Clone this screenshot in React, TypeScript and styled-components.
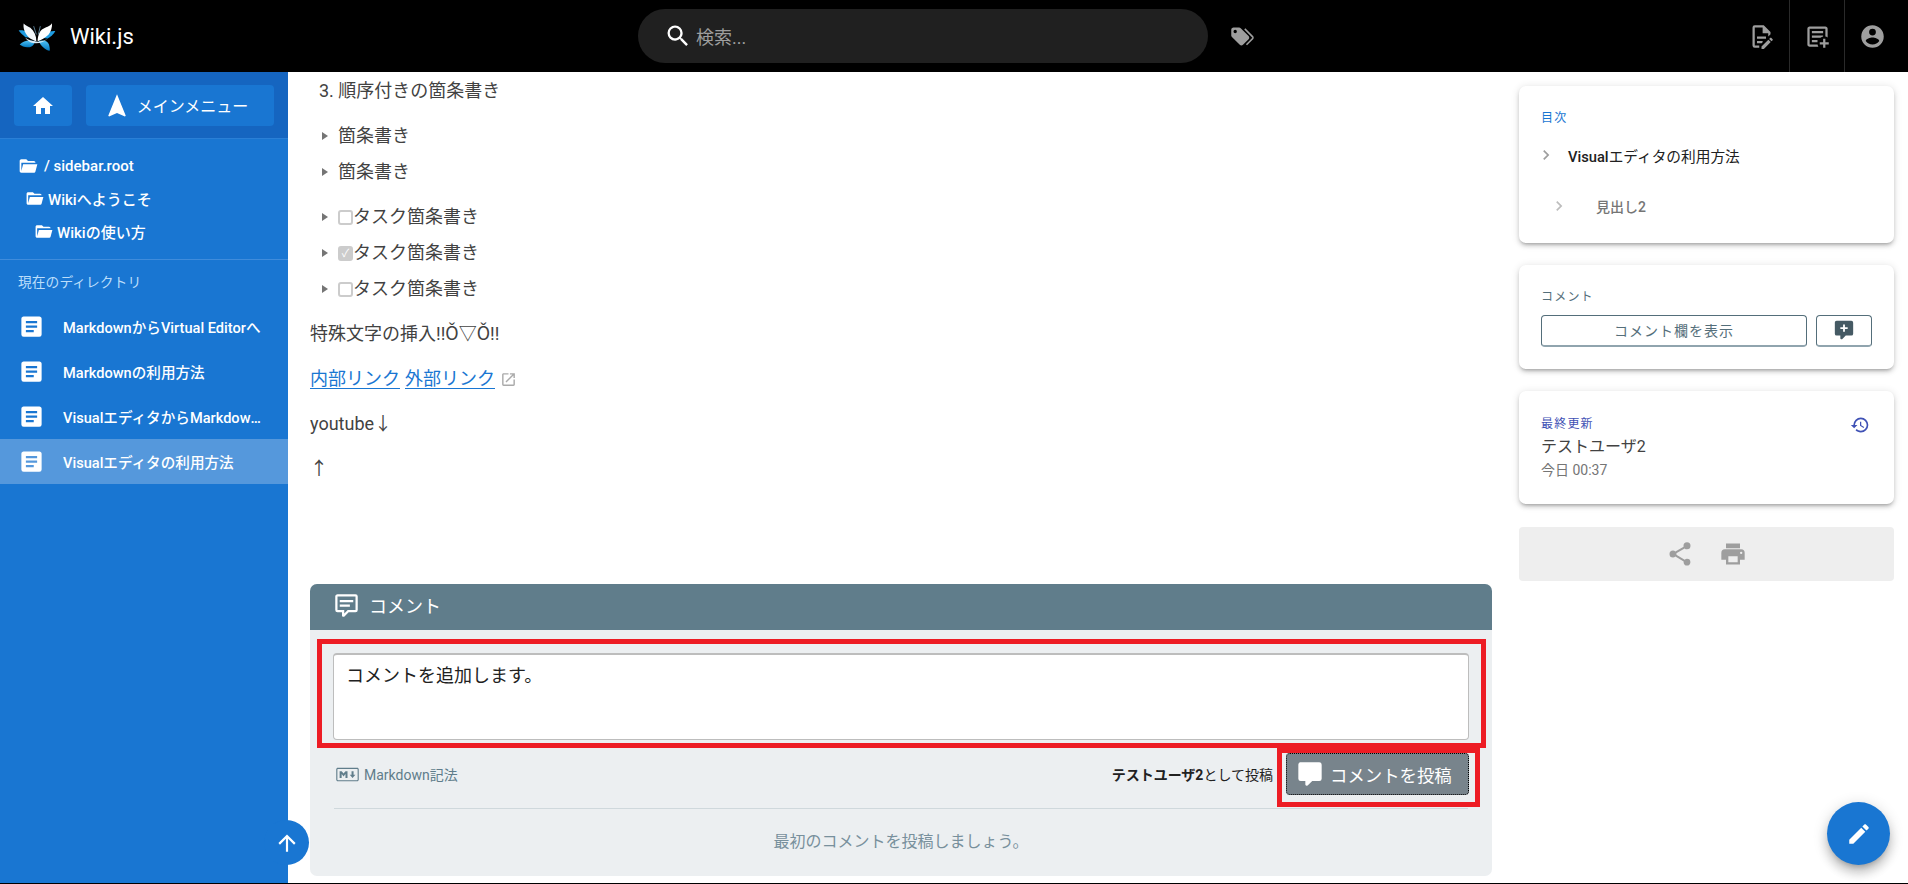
import React from 'react';
import styled, { createGlobalStyle } from 'styled-components';

const GlobalStyle = createGlobalStyle`
  html, body {
    margin: 0;
    padding: 0;
    background: #fff;
  }

  body {
    font-family: Roboto, "Noto Sans CJK JP", sans-serif;
    color: #424242;
    overflow: hidden;
  }

  * {
    box-sizing: border-box;
  }
`;

const mdi = {
  home: 'M10,20V14H14V20H19V12H22L12,3L2,12H5V20H10Z',
  navigation: 'M12,2L4.5,20.29L5.21,21L12,18L18.79,21L19.5,20.29L12,2Z',
  folderOpen: 'M19,20H4C2.89,20 2,19.1 2,18V6C2,4.89 2.89,4 4,4H10L12,6H19A2,2 0 0,1 21,8H21L4,8V18L6.14,10H23.21L20.93,18.5C20.7,19.37 19.92,20 19,20Z',
  textBox: 'M14,17H7V15H14M17,13H7V11H17M17,9H7V7H17M19,3H5C3.89,3 3,3.89 3,5V19A2,2 0 0,0 5,21H19A2,2 0 0,0 21,19V5C21,3.89 20.1,3 19,3Z',
  magnify: 'M9.5,3A6.5,6.5 0 0,1 16,9.5C16,11.11 15.41,12.59 14.44,13.73L14.71,14H15.5L20.5,19L19,20.5L14,15.5V14.71L13.73,14.44C12.59,15.41 11.11,16 9.5,16A6.5,6.5 0 0,1 3,9.5A6.5,6.5 0 0,1 9.5,3M9.5,5C7,5 5,7 5,9.5C5,12 7,14 9.5,14C12,14 14,12 14,9.5C14,7 12,5 9.5,5Z',
  tags: 'M5.5,9A1.5,1.5 0 0,0 7,7.5A1.5,1.5 0 0,0 5.5,6A1.5,1.5 0 0,0 4,7.5A1.5,1.5 0 0,0 5.5,9M17.41,11.58C17.77,11.94 18,12.44 18,13C18,13.55 17.78,14.05 17.41,14.41L12.41,19.41C12.05,19.77 11.55,20 11,20C10.45,20 9.95,19.78 9.58,19.41L2.59,12.42C2.22,12.05 2,11.55 2,11V6C2,4.89 2.89,4 4,4H9C9.55,4 10.05,4.22 10.41,4.58L17.41,11.58M13.54,5.71L14.54,4.71L21.41,11.58C21.78,11.94 22,12.45 22,13C22,13.55 21.78,14.05 21.42,14.41L16.04,19.79L15.04,18.79L20.75,13L13.54,5.71Z',
  account: 'M12,19.2C9.5,19.2 7.29,17.92 6,16C6.03,14 10,12.9 12,12.9C14,12.9 17.97,14 18,16C16.71,17.92 14.5,19.2 12,19.2M12,5A3,3 0 0,1 15,8A3,3 0 0,1 12,11A3,3 0 0,1 9,8A3,3 0 0,1 12,5M12,2A10,10 0 0,0 2,12A10,10 0 0,0 12,22A10,10 0 0,0 22,12C22,6.47 17.5,2 12,2Z',
  fileEdit: 'M8,12H16V14H8V12M10,20H6V4H13V9H18V12.1L20,10.1V8L14,2H6A2,2 0 0,0 4,4V20A2,2 0 0,0 6,22H10V20M8,18H12.1L13,17.1V16H8V18M20.2,13C20.3,13 20.5,13.1 20.6,13.2L21.9,14.5C22.1,14.7 22.1,15.1 21.9,15.3L20.9,16.3L18.8,14.2L19.8,13.2C19.9,13.1 20,13 20.2,13M20.2,16.9L14.1,23H12V20.9L18.1,14.8L20.2,16.9Z',
  textBoxPlus: 'M17,14H19V17H22V19H19V22H17V19H14V17H17V14M5,3H19C20.11,3 21,3.89 21,5V12.8C20.39,12.45 19.72,12.2 19,12.08V5H5V19H12.08C12.2,19.72 12.45,20.39 12.8,21H5C3.89,21 3,20.11 3,19V5C3,3.89 3.89,3 5,3M7,7H17V9H7V7M7,11H17V12.08C16.15,12.22 15.37,12.54 14.68,13H7V11M7,15H12V17H7V15Z',
  commentText: 'M9,22A1,1 0 0,1 8,21V18H4A2,2 0 0,1 2,16V4C2,2.89 2.9,2 4,2H20A2,2 0 0,1 22,4V16A2,2 0 0,1 20,18H13.9L10.2,21.71C10,21.9 9.75,22 9.5,22V22H9M10,16V19.08L13.08,16H20V4H4V16H10M6,7H18V9H6V7M6,11H15V13H6V11Z',
  comment: 'M9,22A1,1 0 0,1 8,21V18H4A2,2 0 0,1 2,16V4C2,2.89 2.9,2 4,2H20A2,2 0 0,1 22,4V16A2,2 0 0,1 20,18H13.9L10.2,21.71C10,21.9 9.75,22 9.5,22V22H9Z',
  commentPlus: 'M9,22A1,1 0 0,1 8,21V18H4A2,2 0 0,1 2,16V4C2,2.89 2.9,2 4,2H20A2,2 0 0,1 22,4V16A2,2 0 0,1 20,18H13.9L10.2,21.71C10,21.9 9.75,22 9.5,22H9M11,6V9H8V11H11V14H13V11H16V9H13V6H11Z',
  markdown: 'M20.56,18H3.44C2.65,18 2,17.37 2,16.59V7.41C2,6.63 2.65,6 3.44,6H20.56C21.35,6 22,6.63 22,7.41V16.59C22,17.37 21.35,18 20.56,18M3.44,7C3.2,7 3,7.18 3,7.41V16.59C3,16.82 3.2,17 3.44,17H20.56C20.8,17 21,16.82 21,16.59V7.41C21,7.18 20.8,7 20.56,7H3.44M5,15V9H6.8L8.5,11.2L10.2,9H12V15H10.2V11.6L8.5,13.8L6.8,11.6V15H5M16.5,15L14,12.2H15.6V9H17.4V12.2H19L16.5,15Z',
  history: 'M13.5,8H12V13L16.28,15.54L17,14.33L13.5,12.25V8M13,3A9,9 0 0,0 4,12H1L4.96,16.03L9,12H6A7,7 0 0,1 13,5A7,7 0 0,1 20,12A7,7 0 0,1 13,19C11.07,19 9.32,18.21 8.06,16.94L6.64,18.36C8.27,20 10.5,21 13,21A9,9 0 0,0 22,12A9,9 0 0,0 13,3',
  share: 'M18,16.08C17.24,16.08 16.56,16.38 16.04,16.85L8.91,12.7C8.96,12.47 9,12.24 9,12C9,11.76 8.96,11.53 8.91,11.3L15.96,7.19C16.5,7.69 17.21,8 18,8A3,3 0 0,0 21,5A3,3 0 0,0 18,2A3,3 0 0,0 15,5C15,5.24 15.04,5.47 15.09,5.7L8.04,9.81C7.5,9.31 6.79,9 6,9A3,3 0 0,0 3,12A3,3 0 0,0 6,15C6.79,15 7.5,14.69 8.04,14.19L15.16,18.34C15.11,18.55 15.08,18.77 15.08,19C15.08,20.61 16.39,21.91 18,21.91C19.61,21.91 20.92,20.61 20.92,19A2.92,2.92 0 0,0 18,16.08Z',
  printer: 'M18,3H6V7H18M19,12A1,1 0 0,1 18,11A1,1 0 0,1 19,10A1,1 0 0,1 20,11A1,1 0 0,1 19,12M16,19H8V14H16M19,8H5A3,3 0 0,0 2,11V17H6V21H18V17H22V11A3,3 0 0,0 19,8Z',
  pencil: 'M20.71,7.04C21.1,6.65 21.1,6 20.71,5.63L18.37,3.29C18,2.9 17.35,2.9 16.96,3.29L15.12,5.12L18.87,8.87M3,17.25V21H6.75L17.81,9.93L14.06,6.18L3,17.25Z',
  arrowUp: 'M13,20H11V8L5.5,13.5L4.08,12.08L12,4.16L19.92,12.08L18.5,13.5L13,8V20Z',
  chevron: 'M8.59,16.58L13.17,12L8.59,7.41L10,6L16,12L10,18L8.59,16.58Z',
  openNew: 'M14,3V5H17.59L7.76,14.83L9.17,16.24L19,6.41V10H21V3M19,19H5V5H12V3H5C3.89,3 3,3.9 3,5V19A2,2 0 0,0 5,21H19A2,2 0 0,0 21,19V12H19V19Z',
};

const Svg = styled.svg<{ $size: number; $color: string }>`
  width: ${p => p.$size}px;
  height: ${p => p.$size}px;
  flex: none;
  fill: ${p => p.$color};
`;

const Icon: React.FC<{ d: string; size?: number; color?: string }> = ({ d, size = 24, color = '#fff' }) => (
  <Svg viewBox="0 0 24 24" $size={size} $color={color}><path d={d} /></Svg>
);

const Logo = () => (
  <svg width="40" height="31" viewBox="20 30 120 92">
    <defs>
      <linearGradient id="wingLow" x1="0" y1="0" x2="0" y2="1">
        <stop offset="0" stopColor="#4fc3f7" />
        <stop offset="1" stopColor="#0277bd" />
      </linearGradient>
    </defs>
    <path d="M25 58 C40 55 55 62 68 80 L45 78 C38 72 30 65 25 58 Z" fill="#1e9be0" />
    <path d="M135 60 C120 58 105 65 92 80 L112 82 C122 76 130 68 135 60 Z" fill="#1e9be0" />
    <path d="M28 100 C40 88 55 85 75 90 C72 100 65 108 55 108 C45 110 35 105 28 100 Z" fill="url(#wingLow)" />
    <path d="M85 90 C100 85 112 90 116 100 C118 108 119 114 118 119 C105 116 92 105 85 90 Z" fill="url(#wingLow)" />
    <path d="M40 37 C38 50 42 65 55 78 C62 84 72 88 78 90 C78 75 72 60 60 50 C52 45 45 42 40 37 Z" fill="#f4f8fb" />
    <path d="M125 36 C120 45 105 48 95 55 C86 62 82 78 82 90 C92 88 105 80 115 70 C122 60 126 48 125 36 Z" fill="#ffffff" />
    <path d="M45 80 C60 92 92 98 112 82 C100 94 80 100 62 94 C55 91 49 86 45 80 Z" fill="#dcebf5" />
    <path d="M78 70 L70 45 M84 70 L90 45" stroke="#7fb2d0" strokeWidth="2" fill="none" />
  </svg>
);

const Root = styled.div`
  position: relative;
  width: 1908px;
  height: 884px;
  overflow: hidden;
  display: flex;
  flex-direction: column;
  border-bottom: 1px solid #000;
`;

const Header = styled.header`
  height: 72px;
  flex: none;
  background: #000;
  display: flex;
  align-items: center;
  padding-left: 17px;
`;

const Brand = styled.div`
  width: 621px;
  display: flex;
  align-items: center;
  gap: 13px;
  color: #fff;
  font-size: 22px;
  font-weight: 400;
`;

const SearchBox = styled.div`
  width: 570px;
  height: 54px;
  background: #202020;
  border-radius: 27px;
  padding-left: 26px;
  display: flex;
  align-items: center;
  gap: 4px;
  color: #9e9e9e;
  font-size: 18px;
`;

const TagButton = styled.div`
  margin-left: 21px;
  display: flex;
`;

const HeaderActions = styled.div`
  margin-left: auto;
  height: 100%;
  padding-right: 9px;
  display: flex;
`;

const HeaderAction = styled.div<{ $divider?: boolean }>`
  width: 55px;
  height: 100%;
  display: flex;
  align-items: center;
  justify-content: center;
  border-left: ${p => (p.$divider ? '1px solid #2a2a2a' : 'none')};
`;

const Body = styled.div`
  flex: 1;
  min-height: 0;
  display: grid;
  grid-template-columns: 288px 1fr 389px;
`;

const Sidebar = styled.nav`
  background: #1976d2;
  color: #fff;
`;

const SidebarTop = styled.div`
  height: 67px;
  background: #1565c0;
  border-bottom: 1px solid #2a7fd6;
  padding: 13px 14px 0;
  display: flex;
  gap: 14px;
`;

const HomeButton = styled.div`
  height: 41px;
  width: 58px;
  background: #1976d2;
  border-radius: 4px;
  display: flex;
  align-items: center;
  justify-content: center;
`;

const MenuButton = styled(HomeButton)`
  width: 189px;
  justify-content: flex-start;
  padding-left: 17px;
  gap: 6px;
  font-size: 16px;

  span {
    margin-top: -2px;
  }
`;

const Tree = styled.div`
  height: 121px;
  padding-top: 10px;
  border-bottom: 1px solid #3f8cdc;
`;

const TreeRow = styled.div<{ $indent: number; $gap?: number }>`
  height: 33px;
  padding-left: ${p => p.$indent}px;
  display: flex;
  align-items: center;
  gap: ${p => p.$gap ?? 4}px;
  font-size: 15px;
  font-weight: 500;
`;

const SectionTitle = styled.div`
  height: 44px;
  padding: 12px 0 0 18px;
  font-size: 13.8px;
  line-height: 20px;
  color: #bbdefb;
`;

const PageRow = styled.div<{ $active?: boolean }>`
  height: 45px;
  padding: 0 24px 0 18px;
  display: flex;
  align-items: center;
  gap: 18px;
  background: ${p => (p.$active ? '#5598dc' : 'transparent')};
  font-size: 14.6px;
  font-weight: 500;
`;

const PageLabel = styled.span`
  overflow: hidden;
  white-space: nowrap;
  text-overflow: ellipsis;
`;

const Main = styled.main`
  min-width: 0;
  padding: 0 27px 0 22px;
`;

const Line = styled.div<{ $gap?: boolean; $indent?: number }>`
  height: 36px;
  line-height: 36px;
  font-size: 18px;
  margin-top: ${p => (p.$gap ? 9 : 0)}px;
  padding-left: ${p => p.$indent ?? 0}px;
  padding-top: 2px;
  display: flex;
  align-items: center;
  white-space: pre;
`;

const Bullet = styled.span`
  width: 0;
  height: 0;
  margin: 0 10px 0 -16px;
  border-left: 6px solid #757575;
  border-top: 4px solid transparent;
  border-bottom: 4px solid transparent;
`;

const Checkbox = styled.span<{ $checked?: boolean }>`
  width: 15px;
  height: 15px;
  border: 2px solid #ccc;
  border-radius: 3px;
  background: ${p => (p.$checked ? '#ccc' : '#fff')};
  color: #fff;
  font-size: 11px;
  line-height: 11px;
  text-align: center;
`;

const Link = styled.a`
  color: #1976d2;
  margin-right: 5px;
  text-decoration: underline;
  text-decoration-thickness: 1px;
  text-underline-offset: 3px;
`;

const CommentPanel = styled.section`
  margin-top: 98px;
  height: 292px;
  border-radius: 7px;
  background: #eceff1;
  overflow: hidden;
`;

const PanelHeader = styled.div`
  height: 46px;
  background: #607d8b;
  color: #fff;
  padding: 0 0 4px 23px;
  display: flex;
  align-items: center;
  gap: 9px;
  font-size: 18px;
`;

const HighlightBox = styled.div`
  margin: 9px 6px 0 7px;
  height: 109px;
  border: 5px solid #ed1c24;
  padding: 9px 12px 3px 11px;
`;

const TextArea = styled.div`
  height: 87px;
  background: #fff;
  border: 1px solid #bdbdbd;
  border-top: 2px solid #bdbdbd;
  border-radius: 4px;
  padding: 9px 12px;
  font-size: 18px;
  line-height: 24px;
  color: #212121;
`;

const PanelFooter = styled.div`
  margin: 0 24px;
  height: 61px;
  border-bottom: 1px solid #cfd8dc;
  padding-top: 5px;
  display: flex;
  align-items: flex-start;
`;

const MarkdownHint = styled.div`
  height: 42px;
  display: flex;
  align-items: center;
  gap: 3px;
  color: #607d8b;
  font-size: 14px;
`;

const PostAs = styled.div`
  margin-left: auto;
  height: 42px;
  margin-right: 13px;
  display: flex;
  align-items: center;
  font-size: 14px;
  color: #212121;

  strong {
    font-weight: 700;
  }
`;

const PostButton = styled.div`
  position: relative;
  width: 183px;
  height: 42px;
  margin-right: -1px;
  background: #78848c;
  border: 1px dotted #000;
  border-radius: 4px;
  color: #fff;
  font-size: 17.4px;
  display: flex;
  align-items: center;
  padding-left: 9px;
  gap: 6px;
`;

// annotation drawn over the button
const PostHighlight = styled.span`
  position: absolute;
  top: -6px;
  left: -10px;
  right: -12px;
  bottom: -13px;
  border: 5px solid #ed1c24;
`;

const EmptyNote = styled.div`
  height: 66px;
  line-height: 66px;
  text-align: center;
  color: #78909c;
  font-size: 16px;
`;

const Aside = styled.aside`
  padding: 14px 14px 0 0;
  display: flex;
  flex-direction: column;
  gap: 22px;
`;

const Card = styled.div<{ $height: number }>`
  height: ${p => p.$height}px;
  background: #fff;
  border-radius: 7px;
  padding: 0 22px;
  box-shadow: 0 3px 3px -2px rgba(0, 0, 0, 0.2), 0 3px 4px rgba(0, 0, 0, 0.14), 0 1px 8px rgba(0, 0, 0, 0.12);
`;

const CardLabel = styled.div<{ $color: string; $top: number }>`
  padding-top: ${p => p.$top}px;
  font-size: 12px;
  line-height: 18px;
  letter-spacing: 1.2px;
  color: ${p => p.$color};
`;

const TocRow = styled.div`
  height: 50px;
  margin: 3px 0 0 -5px;
  display: flex;
  align-items: center;
  gap: 12px;
  font-size: 14.7px;
  color: #212121;

  strong {
    font-weight: 500;
  }
`;

const TocSubRow = styled(TocRow)`
  margin-top: 1px;
  padding-left: 13px;
  gap: 27px;
  font-size: 14px;
  font-weight: 500;
  color: #757575;
`;

const CommentActions = styled.div`
  display: flex;
  gap: 9px;
  margin-top: 9px;
`;

const OutlineButton = styled.div<{ $wide?: boolean }>`
  height: 32px;
  width: ${p => (p.$wide ? '266px' : '56px')};
  padding-bottom: 2px;
  border: 1px solid #546e7a;
  border-bottom-width: 2px;
  border-bottom-color: #90a4ae;
  border-radius: 4px;
  color: #546e7a;
  font-size: 14px;
  letter-spacing: 1px;
  display: flex;
  align-items: center;
  justify-content: center;
`;

const UpdatedCard = styled(Card)`
  display: flex;
  justify-content: space-between;
`;

const AuthorName = styled.div`
  margin-top: 2px;
  font-size: 16px;
  line-height: 24px;
`;

const UpdatedAt = styled.div`
  font-size: 14px;
  line-height: 22px;
  color: #757575;
`;

const HistoryButton = styled.div`
  padding: 24px 2px 0 0;
`;

const ShareBar = styled.div`
  height: 54px;
  margin-top: 1px;
  background: #eee;
  border-radius: 4px;
  display: flex;
  align-items: center;
  justify-content: center;
  gap: 25px;
`;

const ScrollTop = styled.div`
  position: absolute;
  left: 264px;
  top: 820px;
  width: 45px;
  height: 45px;
  border-radius: 50%;
  background: #1976d2;
  display: flex;
  align-items: center;
  justify-content: center;
`;

const Fab = styled.div`
  position: absolute;
  left: 1827px;
  top: 802px;
  width: 63px;
  height: 63px;
  border-radius: 50%;
  background: #1976d2;
  display: flex;
  align-items: center;
  justify-content: center;
  box-shadow: 0 5px 5px -3px rgba(0, 0, 0, 0.2), 0 8px 10px 1px rgba(0, 0, 0, 0.14), 0 3px 14px 2px rgba(0, 0, 0, 0.12);
`;

const pages = [
  { title: 'MarkdownからVirtual Editorへ' },
  { title: 'Markdownの利用方法' },
  { title: 'VisualエディタからMarkdownへ' },
  { title: 'Visualエディタの利用方法', active: true },
];

const tasks = [false, true, false];

export default function App() {
  return (
    <Root>
      <GlobalStyle />
      <Header>
        <Brand><Logo />Wiki.js</Brand>
        <SearchBox>
          <Icon d={mdi.magnify} size={28} />
          検索...
        </SearchBox>
        <TagButton><Icon d={mdi.tags} size={27} color="#9e9e9e" /></TagButton>
        <HeaderActions>
          <HeaderAction><Icon d={mdi.fileEdit} size={27} color="#9e9e9e" /></HeaderAction>
          <HeaderAction $divider><Icon d={mdi.textBoxPlus} size={27} color="#9e9e9e" /></HeaderAction>
          <HeaderAction $divider><Icon d={mdi.account} size={27} color="#9e9e9e" /></HeaderAction>
        </HeaderActions>
      </Header>
      <Body>
        <Sidebar>
          <SidebarTop>
            <HomeButton><Icon d={mdi.home} /></HomeButton>
            <MenuButton><Icon d={mdi.navigation} size={28} /><span>メインメニュー</span></MenuButton>
          </SidebarTop>
          <Tree>
            <TreeRow $indent={18} $gap={6}><Icon d={mdi.folderOpen} size={20} />/ sidebar.root</TreeRow>
            <TreeRow $indent={25}><Icon d={mdi.folderOpen} size={19} />Wikiへようこそ</TreeRow>
            <TreeRow $indent={34}><Icon d={mdi.folderOpen} size={19} />Wikiの使い方</TreeRow>
          </Tree>
          <SectionTitle>現在のディレクトリ</SectionTitle>
          {pages.map(page => (
            <PageRow key={page.title} $active={page.active}>
              <Icon d={mdi.textBox} size={27} />
              <PageLabel>{page.title}</PageLabel>
            </PageRow>
          ))}
        </Sidebar>
        <Main>
          <Line $indent={9}>3. 順序付きの箇条書き</Line>
          <Line $gap $indent={28}><Bullet />箇条書き</Line>
          <Line $indent={28}><Bullet />箇条書き</Line>
          {tasks.map((checked, i) => (
            <Line key={i} $gap={i === 0} $indent={28}>
              <Bullet />
              <Checkbox $checked={checked}>{checked ? '✓' : ''}</Checkbox>
              タスク箇条書き
            </Line>
          ))}
          <Line $gap>特殊文字の挿入!!Ǒ▽Ǒ!!</Line>
          <Line $gap>
            <Link>内部リンク</Link>
            <Link>外部リンク</Link>
            <Icon d={mdi.openNew} size={17} color="#aaa" />
          </Line>
          <Line $gap>youtube↓</Line>
          <Line $gap>↑</Line>
          <CommentPanel>
            <PanelHeader><Icon d={mdi.commentText} size={27} />コメント</PanelHeader>
            <HighlightBox>
              <TextArea>コメントを追加します。</TextArea>
            </HighlightBox>
            <PanelFooter>
              <MarkdownHint><Icon d={mdi.markdown} size={27} color="#607d8b" />Markdown記法</MarkdownHint>
              <PostAs><strong>テストユーザ2</strong>として投稿</PostAs>
              <PostButton>
                <Icon d={mdi.comment} size={28} />
                コメントを投稿
                <PostHighlight />
              </PostButton>
            </PanelFooter>
            <EmptyNote>最初のコメントを投稿しましょう。</EmptyNote>
          </CommentPanel>
        </Main>
        <Aside>
          <Card $height={157}>
            <CardLabel $color="#1976d2" $top={23}>目次</CardLabel>
            <TocRow><Icon d={mdi.chevron} size={20} color="#9e9e9e" /><span><strong>Visual</strong>エディタの利用方法</span></TocRow>
            <TocSubRow><Icon d={mdi.chevron} size={20} color="#bdbdbd" />見出し2</TocSubRow>
          </Card>
          <Card $height={104}>
            <CardLabel $color="#546e7a" $top={23}>コメント</CardLabel>
            <CommentActions>
              <OutlineButton $wide>コメント欄を表示</OutlineButton>
              <OutlineButton><Icon d={mdi.commentPlus} size={22} color="#455a64" /></OutlineButton>
            </CommentActions>
          </Card>
          <UpdatedCard $height={113}>
            <div>
              <CardLabel $color="#3f51b5" $top={24}>最終更新</CardLabel>
              <AuthorName>テストユーザ2</AuthorName>
              <UpdatedAt>今日 00:37</UpdatedAt>
            </div>
            <HistoryButton><Icon d={mdi.history} size={20} color="#3f51b5" /></HistoryButton>
          </UpdatedCard>
          <ShareBar>
            <Icon d={mdi.share} size={28} color="#9e9e9e" />
            <Icon d={mdi.printer} size={28} color="#9e9e9e" />
          </ShareBar>
        </Aside>
      </Body>
      <ScrollTop><Icon d={mdi.arrowUp} size={26} /></ScrollTop>
      <Fab><Icon d={mdi.pencil} size={26} /></Fab>
    </Root>
  );
}
